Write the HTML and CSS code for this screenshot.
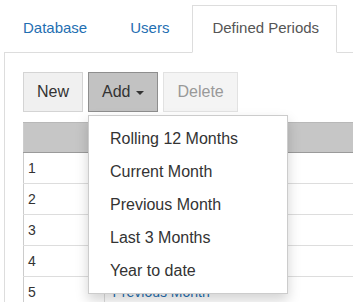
FILE: index.html
```html
<!DOCTYPE html>
<html lang="en">
<head>
    <meta charset="UTF-8">
    <meta name="viewport" content="width=device-width, initial-scale=1.0">
    <title>Defined Periods</title>
    <link rel="stylesheet" href="styles.css">
</head>
<body>
    <div class="page">
        <ul class="tabs">
            <li class="tab"><a href="#">Database</a></li>
            <li class="tab"><a href="#">Users</a></li>
            <li class="tab active"><a href="#">Defined Periods</a></li>
        </ul>

        <div class="panel">
            <div class="toolbar">
                <button class="btn">New</button>
                <div class="btn-group">
                    <button class="btn btn-open">Add <span class="caret"></span></button>
                    <ul class="dropdown">
                        <li><a href="#">Rolling 12 Months</a></li>
                        <li><a href="#">Current Month</a></li>
                        <li><a href="#">Previous Month</a></li>
                        <li><a href="#">Last 3 Months</a></li>
                        <li><a href="#">Year to date</a></li>
                    </ul>
                </div>
                <button class="btn btn-disabled" disabled>Delete</button>
            </div>

            <table class="grid">
                <thead>
                    <tr>
                        <th class="col-id"></th>
                        <th></th>
                    </tr>
                </thead>
                <tbody>
                    <tr><td>1</td><td></td></tr>
                    <tr><td>2</td><td></td></tr>
                    <tr><td>3</td><td></td></tr>
                    <tr><td>4</td><td></td></tr>
                    <tr><td>5</td><td><a href="#">Previous Month</a></td></tr>
                </tbody>
            </table>
        </div>
    </div>
</body>
</html>
```

FILE: styles.css
```css
body {
    margin: 0;
    font-family: "Liberation Sans", Arial, sans-serif;
    color: #333;
    background: #fff;
    overflow: hidden;
}
.page {
    padding-left: 4px;
}
.tabs {
    list-style: none;
    margin: 5px 0 0;
    padding: 0;
    display: flex;
    border-bottom: 1px solid #ddd;
}
.tab {
    margin-bottom: -1px;
    margin-right: 5px;
    border: 1px solid transparent;
}
.tab:first-child {
    margin-left: -1px;
}
.tab a {
    display: block;
    padding: 12px 17px 14px 19px;
    font-size: 15px;
    line-height: 20px;
    color: #1f6fb2;
    text-decoration: none;
}
.tab.active {
    border-color: #ddd;
    border-bottom-color: #fff;
    background: #fff;
}
.tab.active a {
    color: #555;
}
.panel {
    border-left: 1px solid #ddd;
    padding: 19px 0 0 18px;
    height: 230px;
}
.toolbar {
    display: flex;
    gap: 5px;
    margin-bottom: 10px;
}
.btn {
    font-family: inherit;
    font-size: 16px;
    height: 40px;
    padding: 0 13px;
    border: 1px solid #d4d4d4;
    background: #f0f0f0;
    color: #333;
    cursor: pointer;
}
.btn-open {
    background: #c2c2c2;
    border-color: #8e8e8e;
    display: flex;
    align-items: center;
    gap: 6px;
}
.btn-disabled {
    background: #f4f4f4;
    border-color: #e2e2e2;
    color: #999;
    cursor: default;
}
.caret {
    width: 0;
    height: 0;
    border-left: 4px solid transparent;
    border-right: 4px solid transparent;
    border-top: 4px solid #333;
    margin-top: 1px;
}
.btn-group {
    position: relative;
    display: flex;
}
.dropdown {
    position: absolute;
    top: 100%;
    left: 0;
    z-index: 10;
    margin: 3px 0 0;
    padding: 6px 0;
    list-style: none;
    width: 198px;
    background: #fff;
    border: 1px solid #ccc;
    box-shadow: 0 6px 12px rgba(0, 0, 0, 0.175);
}
.dropdown a {
    display: block;
    padding: 6px 21px;
    font-size: 16px;
    line-height: 21px;
    color: #333;
    text-decoration: none;
    white-space: nowrap;
}
.grid {
    width: 100%;
    border-collapse: collapse;
    border-left: 1px solid #ccc;
    font-size: 14px;
}
.grid th {
    background: #c6c6c6;
    border-top: 1px solid #b8b8b8;
    border-bottom: 1px solid #9a9a9a;
    height: 29px;
    padding: 0 5px;
    text-align: left;
    font-weight: normal;
}
.grid th.col-id {
    width: 70px;
}
.grid td {
    padding: 7px 4px 6px;
    height: 17px;
    line-height: 17px;
    border-bottom: 1px solid #ddd;
}
.grid td + td {
    border-left: 1px solid #ddd;
    padding-left: 8px;
}
.grid td a {
    color: #1f6fb2;
    text-decoration: none;
}
```
